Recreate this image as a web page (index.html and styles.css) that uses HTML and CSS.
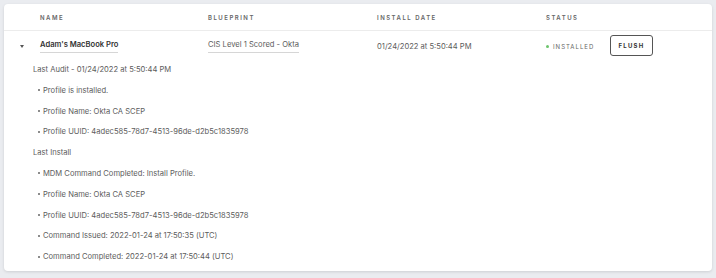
FILE: index.html
```html
<!DOCTYPE html>
<html lang="en">
<head>
  <meta charset="UTF-8">
  <title>Device Profiles</title>
  <link rel="stylesheet" href="styles.css">
</head>
<body>
  <div class="card">
    <!-- Table header -->
    <div class="row head">
      <div class="cell caret-cell"></div>
      <div class="cell">Name</div>
      <div class="cell">Blueprint</div>
      <div class="cell">Install Date</div>
      <div class="cell">Status</div>
      <div class="cell"></div>
    </div>

    <!-- Device row -->
    <div class="row device">
      <div class="cell caret-cell"><span class="caret"></span></div>
      <div class="cell"><span class="link name">Adam's MacBook Pro</span></div>
      <div class="cell"><span class="link">CIS Level 1 Scored - Okta</span></div>
      <div class="cell">01/24/2022 at 5:50:44 PM</div>
      <div class="cell status"><span class="dot"></span>Installed</div>
      <div class="cell"><button class="flush">Flush</button></div>
    </div>

    <!-- Expanded details -->
    <div class="details">
      <p class="title">Last Audit - 01/24/2022 at 5:50:44 PM</p>
      <p class="item">Profile is installed.</p>
      <p class="item">Profile Name: Okta CA SCEP</p>
      <p class="item">Profile UUID: 4adec585-78d7-4513-96de-d2b5c1835978</p>
      <p class="title">Last Install</p>
      <p class="item">MDM Command Completed: Install Profile.</p>
      <p class="item">Profile Name: Okta CA SCEP</p>
      <p class="item">Profile UUID: 4adec585-78d7-4513-96de-d2b5c1835978</p>
      <p class="item">Command Issued: 2022-01-24 at 17:50:35 (UTC)</p>
      <p class="item">Command Completed: 2022-01-24 at 17:50:44 (UTC)</p>
    </div>
  </div>
</body>
</html>
```

FILE: styles.css
```css
* {
  box-sizing: border-box;
}
body {
  margin: 0;
  padding: 4px;
  background: #eaecf0;
  font-family: 'Inter', 'Liberation Sans', sans-serif;
  color: #5c5c5c;
  font-size: 7.6px;
}
.card {
  background: #fff;
  border-radius: 4px;
  box-shadow: 0 1px 3px rgba(0, 0, 0, 0.12);
  height: 267px;
}
/* Rows */
.row {
  display: grid;
  grid-template-columns: 36px 168px 169px 169px 64px 1fr;
  align-items: center;
}
.row.head {
  height: 27px;
  border-bottom: 1px solid #ececec;
  font-size: 6px;
  font-weight: 600;
  letter-spacing: 1.5px;
  text-transform: uppercase;
  color: #666;
}
.row.device {
  height: 28px;
  padding-top: 2px;
}
.caret-cell {
  display: flex;
  justify-content: center;
}
.caret {
  width: 0;
  height: 0;
  border-left: 2.5px solid transparent;
  border-right: 2.5px solid transparent;
  border-top: 3px solid #555;
  margin-left: -1px;
}
.link {
  display: inline-block;
  padding-bottom: 3px;
  border-bottom: 1px solid #d6d6d6;
}
.name {
  font-weight: 600;
  color: #333;
}
.status {
  font-size: 6px;
  letter-spacing: 1px;
  text-transform: uppercase;
  color: #666;
  display: flex;
  align-items: center;
}
.dot {
  width: 3px;
  height: 3px;
  border-radius: 50%;
  background: #6cc46c;
  margin-right: 4px;
}
.flush {
  width: 43px;
  height: 21px;
  margin-top: -1px;
  background: #fff;
  border: 1px solid #555;
  border-radius: 3px;
  font-family: inherit;
  font-size: 6px;
  font-weight: 700;
  letter-spacing: 1.3px;
  text-transform: uppercase;
  color: #333;
  padding: 0;
}
/* Expanded details */
.details {
  padding: 1px 0 0 29px;
}
.details p {
  margin: 0;
  height: 20.8px;
  line-height: 20.8px;
}
.details .item {
  padding-left: 5px;
}
.details .item::before {
  content: "";
  display: inline-block;
  width: 2px;
  height: 2px;
  border-radius: 50%;
  background: #666;
  vertical-align: middle;
  margin: 0 3px 1px 0;
}
```
